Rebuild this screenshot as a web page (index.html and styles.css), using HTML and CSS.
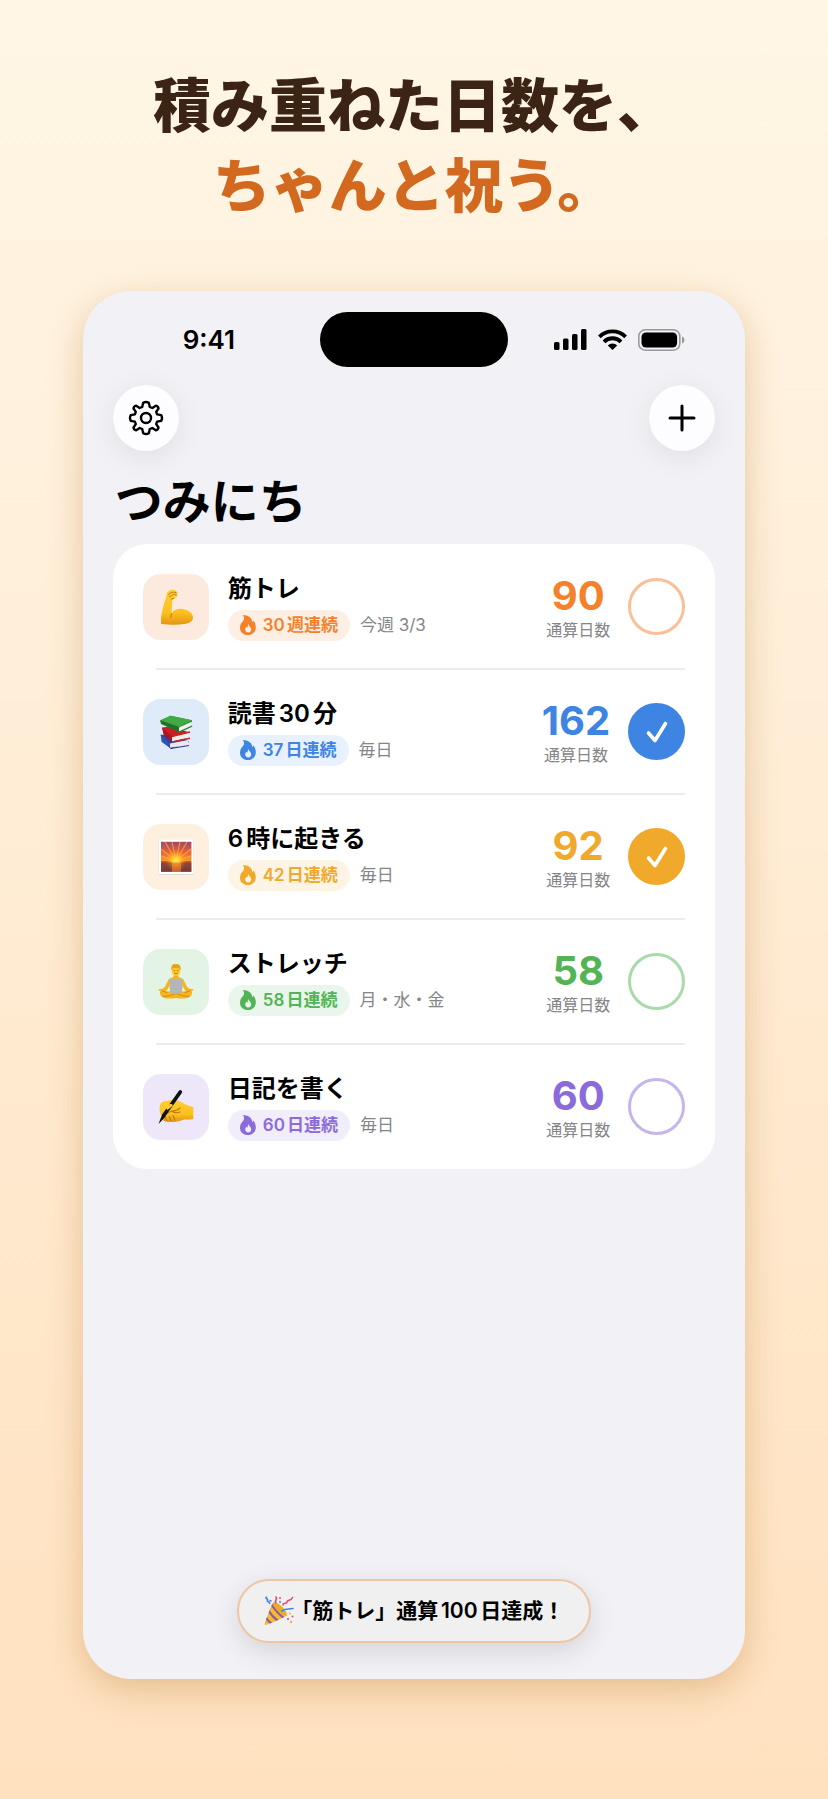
FILE: index.html
```html
<!DOCTYPE html>
<html lang="ja">
<head>
<meta charset="utf-8">
<meta name="viewport" content="width=device-width, initial-scale=1">
<title>つみにち</title>
<link rel="stylesheet" href="styles.css">
</head>
<body>
<svg class="defs" aria-hidden="true">
  <symbol id="flame" viewBox="0 0 16 20">
    <path fill="currentColor" fill-rule="evenodd" d="M2.600 0C8 0 12.200 2.800 12.400 7.200c.5-.4.8-.9.9-1.600 1.700 1.800 2.500 4.200 2.500 6.600 0 4.600-3.300 7.800-7.900 7.800S0 16.900 0 12.700C0 9.300 1.800 7.600 3.400 5.600 4.500 4 4.300 1.600 2.600 0zM8.500 9c-.8 1.100-.7 2.600-1.200 3.700-.4-.1-.7-.4-.9-.9-.8.8-1.200 1.800-1.200 2.700 0 1.800 1.300 2.900 3 2.900s3-1.200 3-3c0-2.400-2.500-3.200-2.700-5.400z"/>
  </symbol>
  <symbol id="tick" viewBox="0 0 24 24">
    <path fill="none" stroke="#fff" stroke-width="3.600" stroke-linecap="round" stroke-linejoin="round" d="M3.500 13l6.500 7.500L20.500 3.500"/>
  </symbol>
</svg>

<h1 class="headline">積み重ねた日数を、<span class="headline-accent">ちゃんと祝う。</span></h1>

<main class="phone">
  <div class="status">
    <span class="time">9:41</span>
    <span class="island"></span>
    <span class="indicators">
      <svg width="33" height="21" viewBox="0 0 33 21"><g fill="#000"><rect x="0" y="13" width="5.500" height="8" rx="1.500"/><rect x="9" y="9.500" width="5.500" height="11.500" rx="1.500"/><rect x="18" y="5" width="5.500" height="16" rx="1.500"/><rect x="27" y="0" width="5.500" height="21" rx="1.500"/></g></svg>
      <svg width="29" height="21" viewBox="0 0 29 21"><g fill="none" stroke="#000" stroke-width="3.800"><path d="M1.400 7.800a18.500 18.500 0 0 1 26.200 0"/><path d="M6 12.800a12 12 0 0 1 17 0"/></g><path d="M9.800 16.400a6.700 6.700 0 0 1 9.400 0L14.500 21z"/></svg>
      <svg width="47" height="22" viewBox="0 0 47 22"><rect x=".8" y=".8" width="41" height="20.400" rx="6.500" fill="none" stroke="#9b9b9e" stroke-width="1.600"/><rect x="3.500" y="3.500" width="35.600" height="15" rx="4.500"/><path fill="#9b9b9e" d="M44 7.500c3.300 1 3.300 6 0 7z"/></svg>
    </span>
  </div>

  <nav class="toolbar">
    <button class="round-button" type="button" aria-label="設定">
      <svg width="36" height="36" viewBox="0 0 36 36" fill="none" stroke="#000" stroke-width="2.400" stroke-linejoin="round"><circle cx="18" cy="18" r="5"/><path d="M15.200 2.800Q18 1.200 20.800 2.800L21.800 7L24.300 8L27.800 5.700Q30.100 6.200 30.500 8.500L28.200 11.900L29.100 14.300L33.200 15.200Q34.800 18 33.200 20.800L29.100 21.700L28.200 24.100L30.500 27.500Q30.100 29.800 27.800 30.300L24.300 28L21.800 29L20.800 33.200Q18 34.800 15.200 33.200L14.200 29L11.700 28L8.200 30.300Q5.900 29.800 5.500 27.500L7.800 24.100L6.900 21.700L2.800 20.800Q1.200 18 2.800 15.200L6.900 14.300L7.800 11.900L5.500 8.500Q5.900 6.200 8.200 5.700L11.700 8L14.200 7z"/></svg>
    </button>
    <button class="round-button" type="button" aria-label="追加">
      <svg width="28" height="28" viewBox="0 0 28 28" fill="none" stroke="#000" stroke-width="3" stroke-linecap="round"><path d="M14 2v24M2 14h24"/></svg>
    </button>
  </nav>

  <h2 class="title">つみにち</h2>

  <ul class="habits">
    <li class="habit orange">
      <div class="row">
        <span class="tile">
          <svg width="36" height="36" viewBox="0 0 36 36"><defs><linearGradient id="skin" x1="0" y1="0" x2="0" y2="1"><stop offset="0" stop-color="#ffd02d"/><stop offset=".65" stop-color="#fcc021"/><stop offset="1" stop-color="#e39514"/></linearGradient></defs><path fill="url(#skin)" d="M8.500 6C9 2 12 .6 14.500.8c2.500.3 5.300 1.400 5 3.800-.1 3-1.500 4.600-3.800 5.400-1.700.8-1.500 2-1.500 4l-.8 10.500c2.600-4 7-5.300 11-4.500 6 .8 10.600 4.500 10.600 8.500 0 4-3.500 5.700-9 6.600-7 1.300-16 .5-23 0C2.500 25 5.800 15 7.800 9.500z"/><path fill="none" stroke="#bf7b0c" stroke-linecap="round" stroke-width="1" d="M13.400 24.500l-.6 4M10.500 5.500c2-2 4-3 7.500-2M11.500 7.500c2 .5 2.500-2.500 5-2l2 .5M13 10l2.500-.5"/></svg>
        </span>
        <div class="info">
          <h3 class="name">筋トレ</h3>
          <p class="meta"><span class="badge"><svg class="flame"><use href="#flame"/></svg>30週連続</span><span class="when">今週 3/3</span></p>
        </div>
        <p class="total"><strong>90</strong><span>通算日数</span></p>
        <label class="check"><input type="checkbox" aria-label="筋トレ"><svg class="tick"><use href="#tick"/></svg></label>
      </div>
    </li>
    <li class="habit blue">
      <div class="row">
        <span class="tile">
          <svg width="36" height="36" viewBox="0 0 36 36"><path fill="#2b419f" d="M2.500 21l19-2 9.500 9-18 7L4 26z"/><path fill="#e9e8ec" d="M12 29.500l18-3.500v5l-18 2.800z"/><path fill="#3151b3" d="M3 20l9 9.500v4.300l1 1-9.500-7z"/><path fill="none" stroke="#263b91" stroke-width="1.200" d="M12.500 34.500L31 31.500"/><path fill="#cb2023" d="M4 13.500l8-1 20 6-17.500 6L5.500 20z"/><path fill="#f0eeee" d="M14 22.500l16.500-4v5.200L14 27.500z"/><path fill="#a91520" d="M4 13.500l10 9v5.500l-8-7z"/><path fill="none" stroke="#ce2428" stroke-width="1.400" d="M14 22.500L32 18M14 28l18-3.800"/><path fill="#258b32" d="M2.300 6.500L12.500 1.800 34 6.300v1.500L20 17 3 9z"/><path fill="#43a947" d="M2.300 6.300L12.500 1.800 34 6.300 21 13z"/><path fill="#f2f1ed" d="M21 13.500l12-5.500v4l-12 6z"/><path fill="#1c7429" d="M2.300 6.300L21 13v5L3 10z"/><path fill="none" stroke="#217b2c" stroke-width="1.200" d="M20.500 18.400L34.200 12"/></svg>
        </span>
        <div class="info">
          <h3 class="name">読書30分</h3>
          <p class="meta"><span class="badge"><svg class="flame"><use href="#flame"/></svg>37日連続</span><span class="when">毎日</span></p>
        </div>
        <p class="total"><strong>162</strong><span>通算日数</span></p>
        <label class="check"><input type="checkbox" checked aria-label="読書30分"><svg class="tick"><use href="#tick"/></svg></label>
      </div>
    </li>
    <li class="habit yellow">
      <div class="row">
        <span class="tile">
          <svg width="36" height="36" viewBox="0 0 36 36"><defs><linearGradient id="sky" x1="0" y1="0" x2="0" y2="1"><stop offset="0" stop-color="#9c4a68"/><stop offset=".35" stop-color="#e8603d"/><stop offset=".64" stop-color="#fb9a26"/><stop offset=".66" stop-color="#b84f2c"/><stop offset="1" stop-color="#6b3843"/></linearGradient><radialGradient id="sun"><stop offset="0" stop-color="#fff66a"/><stop offset=".35" stop-color="#ffc72a"/><stop offset="1" stop-color="#ff8a20" stop-opacity="0"/></radialGradient></defs><rect x=".6" y=".8" width="35" height="35" rx="1" fill="#d9d4d0"/><rect x=".8" y=".4" width="34.600" height="34.600" rx="1" fill="#fff"/><rect x="3" y="2.800" width="30.400" height="30" fill="url(#sky)"/><path fill="none" stroke="#ffb338" stroke-width="1.100" opacity=".75" d="M18 22L3 17M18 22L3 10M18 22L7 3M18 22L14 3M18 22L22 3M18 22L29 3M18 22l15-12M18 22l15-5"/><circle cx="18" cy="21.500" r="11" fill="url(#sun)"/><path fill="#e4752a" opacity=".7" d="M14 23h9v10h-9z"/><path fill="#7a3b3a" opacity=".5" d="M3 23.500h11v9.300H3zM23 23.500h10.400v9.300H23z"/><path stroke="#ffd84a" stroke-width="1.200" d="M14 23h8"/></svg>
        </span>
        <div class="info">
          <h3 class="name">6時に起きる</h3>
          <p class="meta"><span class="badge"><svg class="flame"><use href="#flame"/></svg>42日連続</span><span class="when">毎日</span></p>
        </div>
        <p class="total"><strong>92</strong><span>通算日数</span></p>
        <label class="check"><input type="checkbox" checked aria-label="6時に起きる"><svg class="tick"><use href="#tick"/></svg></label>
      </div>
    </li>
    <li class="habit green">
      <div class="row">
        <span class="tile">
          <svg width="36" height="36" viewBox="0 0 36 36"><path fill="#f7b51d" d="M11 15c3-1.500 5-1.500 5-3h4c0 1.500 2 1.500 5 3 2.500 3 2.500 7 6 9.500l4 .8c.8.9-.2 1.700-1.500 1.900 1 1 1 3-.5 4.500-2 3-9 3.500-15 2.300C12 35.200 5 34.700 3 31.700c-1.500-1.500-1.500-3.500-.5-4.500C1.200 27 .2 26.200 1 25.300l4-.8c3.500-2.500 3.500-6.500 6-9.500z"/><path fill="#e3f3e4" d="M11.300 21c-.6 3-1.800 4.800-3.300 6.300l4 .2zM24.700 21c.6 3 1.800 4.800 3.300 6.300l-4 .2z"/><path fill="none" stroke="#d08a12" stroke-width="1" stroke-linecap="round" d="M5 32.500c5-.5 9-1 13-3.300 4 2.300 8 2.800 13 3.300M4 27l5 1.500M32 27l-5 1.500"/><path fill="#b2b5bb" d="M12 15.200l2.500-.9c1.800 2.400 5.200 2.400 7 0l2.500.9c1 3-.2 8-.3 13.300-3.500 1.500-7.900 1.500-11.400 0C12.200 23.200 11 18.200 12 15.200z"/><path fill="#f5ad18" d="M15.800 9h4.400v4.500c-1 1.500-3.400 1.500-4.400 0z"/><ellipse cx="18" cy="6.800" rx="4.300" ry="5.300" fill="#ffc72e"/><path fill="#e6a11b" d="M13.400 6C12.500 2 15-.5 17.500.2 20-.8 23.500 1.500 22.600 6c-1-.5-1.500-1.500-2-2.500-2 .7-4 .8-5.500 0-.4 1-.9 2-1.700 2.500z"/><path fill="none" stroke="#94610b" stroke-width=".8" d="M15.500 6.800h1.500M19 6.800h1.500M16.500 9.500h3"/></svg>
        </span>
        <div class="info">
          <h3 class="name">ストレッチ</h3>
          <p class="meta"><span class="badge"><svg class="flame"><use href="#flame"/></svg>58日連続</span><span class="when">月・水・金</span></p>
        </div>
        <p class="total"><strong>58</strong><span>通算日数</span></p>
        <label class="check"><input type="checkbox" aria-label="ストレッチ"><svg class="tick"><use href="#tick"/></svg></label>
      </div>
    </li>
    <li class="habit purple">
      <div class="row">
        <span class="tile">
          <svg width="36" height="36" viewBox="0 0 36 36"><path fill="url(#skin)" d="M2 16c1-3 4-4.500 7-4 4-1.500 9-1.300 13 .5 4 2 8 4.500 13.300 5.500v12c-5 .8-8 .2-11 1-5 2.300-15 2.600-18 1-2-1-2.300-2.500-1.500-4C2 26 1 22 2 16z"/><path fill="none" stroke="#bd780c" stroke-width="1.100" stroke-linecap="round" d="M5 27.500c3-2.500 5-4.500 9-5.500 4 0 6-1 8-3M7 28.500l2 3M11 27.500l2 4M15 26.500l2 4.500M14 22c2 2 5 2 8 1"/><path fill="none" stroke="#111" stroke-width="3.800" stroke-linecap="round" d="M22.300 3L6 26"/><path fill="#111" d="M4.300 25l3.400 2.400L.5 35z"/><path fill="#ffca2c" d="M7 18c3-3 5-3.500 7.500-2.500 1 1.500-2.500 3.500-5 5.500z"/></svg>
        </span>
        <div class="info">
          <h3 class="name">日記を書く</h3>
          <p class="meta"><span class="badge"><svg class="flame"><use href="#flame"/></svg>60日連続</span><span class="when">毎日</span></p>
        </div>
        <p class="total"><strong>60</strong><span>通算日数</span></p>
        <label class="check"><input type="checkbox" aria-label="日記を書く"><svg class="tick"><use href="#tick"/></svg></label>
      </div>
    </li>
  </ul>

  <p class="toast" role="status">
    <svg width="30" height="30" viewBox="0 0 30 30"><defs><clipPath id="cone"><path d="M9 6.500C12 9 20 15 23 19.500 17 23 8 27 1.500 29c-1-.3-1-1-.8-1.500C3 21 6 12 9 6.500z"/></clipPath></defs><path fill="#f5bb2b" d="M9 6.500C12 9 20 15 23 19.500 17 23 8 27 1.500 29c-1-.3-1-1-.8-1.500C3 21 6 12 9 6.500z"/><g clip-path="url(#cone)" fill="none" stroke="#9355b5" stroke-width="2.200"><path d="M7 8c4 6 7 10 13 14M4 14c3 5 6 8 10 11M1 20c2 4 4 6 7 8"/></g><ellipse cx="16" cy="13" rx="3" ry="9.200" transform="rotate(-46 16 13)" fill="#e8ac25"/><g fill="none" stroke-linecap="round" stroke-width="1.600"><path stroke="#4a84e3" d="M2.500 1c-2 2 2 1.500 1 3.500s2.500.5 2 3M18 15c4-3 6-1.500 11-2.500"/><path stroke="#e64c72" d="M12 7c-2-3 2-3 0-6M19 9c0-3 4-.5 4-3s4-.5 5.500-4.500"/><path stroke="#4a84e3" d="M16 5.500v1M6 4.500l1 .5"/></g><g fill="#f5bb2b"><circle cx="26" cy="17.500" r="1"/><circle cx="27" cy="26" r="1.200"/></g><g fill="#e64c72"><circle cx="28.500" cy="20.500" r="1"/><circle cx="16" cy="2" r="1"/></g><circle cx="24" cy="23" r="1" fill="#9355b5"/></svg>
    <span><span class="open-bracket">「</span>筋トレ」通算100日達成！</span>
  </p>
</main>
</body>
</html>
```
FILE: styles.css
```css
* {
  box-sizing: border-box;
}

body {
  margin: 0;
  min-height: 100vh;
  display: flex;
  flex-direction: column;
  align-items: center;
  padding: 62px 0 120px;
  background: linear-gradient(#fff6e5, #ffefd9 35%, #ffe1bf);
  font-family: Inter, "Noto Sans CJK JP", sans-serif;
  color: #000;
  text-autospace: normal;
}

h1, h2, h3, p, ul {
  margin: 0;
  padding: 0;
}

.defs {
  position: absolute;
  width: 0;
  height: 0;
}

.headline {
  font-family: "Noto Sans CJK JP", sans-serif;
  font-size: 58px;
  font-weight: 900;
  line-height: 80px;
  text-align: center;
  color: #3c2414;
}

.headline-accent {
  display: block;
  color: #d2691e;
}

.phone {
  flex: 1;
  width: 80%;
  margin-top: 69px;
  padding: 21px 30px 36px;
  display: flex;
  flex-direction: column;
  border-radius: 48px;
  background: #f1f1f6;
  box-shadow: 0 10px 34px rgba(170, 110, 30, .32);
}

.status {
  display: grid;
  grid-template-columns: 1fr 188px 1fr;
  align-items: center;
  justify-items: center;
  margin: 0 -15px;
}

.time {
  font-size: 26px;
  font-weight: 600;
  line-height: 32px;
}

.island {
  width: 100%;
  height: 55px;
  border-radius: 28px;
  background: #000;
}

.indicators {
  display: flex;
  align-items: center;
  gap: 11px;
}

.toolbar {
  display: flex;
  justify-content: space-between;
  margin-top: 18px;
}

.round-button {
  display: grid;
  place-items: center;
  width: 66px;
  height: 66px;
  padding: 0;
  border: 0;
  border-radius: 50%;
  background: #fdfdff;
  box-shadow: 0 6px 30px rgba(0, 0, 0, .08);
}

.title {
  margin: 21px 0 12px;
  padding-left: 2px;
  font-size: 48px;
  font-weight: 700;
  line-height: 60px;
}

.habits {
  list-style: none;
  padding: 1px 30px;
  border-radius: 34px;
  background: #fff;
}

.habit + .habit::before {
  content: "";
  display: block;
  height: 2px;
  margin-left: 13px;
  background: #ececee;
}

.row {
  display: flex;
  align-items: center;
  min-height: 123px;
}

.tile {
  display: grid;
  place-items: center;
  width: 66px;
  height: 66px;
  border-radius: 18px;
  background: var(--tile);
}

.info {
  flex: 1;
  margin-left: 19px;
}

.name {
  margin-bottom: 5px;
  font-size: 24px;
  font-weight: 600;
  line-height: 32px;
}

.meta {
  display: flex;
  align-items: center;
  gap: 10px;
  font-size: 17px;
  line-height: 31px;
}

.badge {
  display: flex;
  align-items: center;
  gap: 7px;
  padding: 0 12px;
  border-radius: 16px;
  background: var(--badge);
  color: var(--tint);
  font-weight: 600;
}

.flame {
  width: 16px;
  height: 20px;
}

.when {
  color: #858589;
}

.total {
  display: flex;
  flex-direction: column;
  align-items: center;
  margin-right: 18px;
}

.total strong {
  font-size: 40px;
  font-weight: 700;
  line-height: 46px;
  color: var(--tint);
}

.total span {
  font-size: 16px;
  line-height: 22px;
  color: #858589;
}

.check {
  display: grid;
  place-items: center;
}

.check input,
.tick {
  grid-area: 1 / 1;
}

.check input {
  appearance: none;
  width: 57px;
  height: 57px;
  margin: 0;
  border: 3px solid var(--ring);
  border-radius: 50%;
}

.check input:checked {
  border-color: var(--tint);
  background: var(--tint);
}

.tick {
  width: 24px;
  height: 24px;
  visibility: hidden;
  pointer-events: none;
}

.check input:checked + .tick {
  visibility: visible;
}

.orange { --tint: #f5822b; --ring: #f9bf97; --tile: #fdeade; --badge: #feefe5; }
.blue { --tint: #3e84e3; --ring: #9ec1f1; --tile: #e0ebfa; --badge: #e8f1fc; }
.yellow { --tint: #f0a92a; --ring: #f7d494; --tile: #fdf0de; --badge: #fef4e6; }
.green { --tint: #52b455; --ring: #a9daaa; --tile: #e3f3e4; --badge: #eaf6eb; }
.purple { --tint: #8b6bd9; --ring: #c5b5ec; --tile: #ede7f9; --badge: #f1edfb; }

.toast {
  align-self: center;
  display: flex;
  align-items: center;
  gap: 8px;
  margin-top: auto;
  padding: 0 25px;
  border: 2px solid #efc5a4;
  border-radius: 32px;
  background: #f0f0f1;
  box-shadow: 0 8px 28px rgba(0, 0, 0, .12);
  font-size: 21px;
  font-weight: 600;
  line-height: 60px;
}

.open-bracket {
  font-feature-settings: "halt";
}
```
